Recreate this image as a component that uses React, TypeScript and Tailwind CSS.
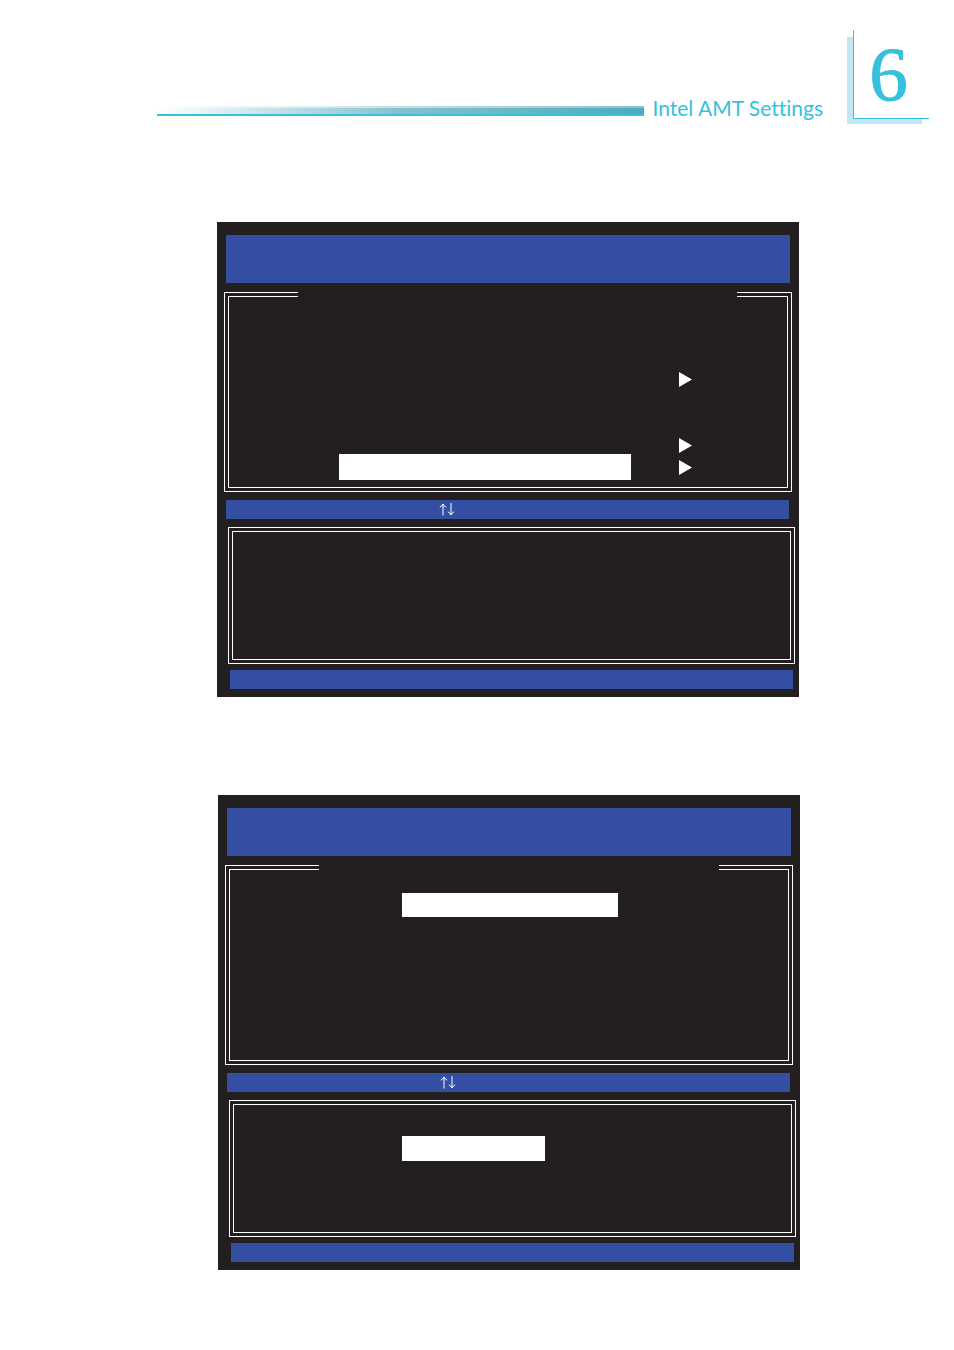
import type { ReactNode } from "react";
import clsx from "clsx";

const MENU_ROWS = [
  { id: 1 },
  { id: 2 },
  { id: 3 },
  { id: 4, arrow: true },
  { id: 5 },
  { id: 6 },
  { id: 7, arrow: true },
  { id: 8, arrow: true, selected: true },
];

function PageHeader() {
  return (
    <header className="flex pl-[157px] pr-[25px] pt-[30px]">
      <div className="mt-[76px] h-[10px] flex-1 border-b-2 border-[#35c1de]">
        <div className="h-[2px] bg-linear-to-r from-white via-[#c5e1e7] to-[#85c2cd]" />
        <div className="h-[6px] bg-linear-to-r from-white via-[#83c1cd] to-[#4aacbe]" />
      </div>
      <h1 className="ml-[8px] mt-[65px] whitespace-nowrap font-['Lato',sans-serif] text-[21px] leading-[26px] text-[#35c1de] [font-variant-ligatures:none]">
        Intel AMT Settings
      </h1>
      <div className="relative ml-[24px] h-[94px] w-[82px]">
        <div className="absolute bottom-0 left-0 h-[87px] w-[75px] bg-[#c2e7f0]" />
        <div className="relative ml-[6px] flex h-[89px] items-center justify-center border-b border-l border-[#35c1de] bg-white pr-[6px] font-['Liberation_Serif',serif] text-[77px] leading-[80px] text-[#35c1de] [-webkit-text-stroke:1px_#35c1de]">
          6
        </div>
      </div>
    </header>
  );
}

function DoubleFrame({ className, children }: { className: string; children?: ReactNode }) {
  return (
    <div className={clsx("flex border border-white p-[3px]", className)}>
      <div className="flex-1 border border-white">{children}</div>
    </div>
  );
}

// covers both top border lines where the frame's title goes
function TitleGap({ className }: { className: string }) {
  return <div className={clsx("relative -mt-[5px] h-[5px] bg-[#231f20]", className)} />;
}

function MenuArrow() {
  return (
    <svg width="13" height="15" viewBox="0 0 13 15" className="fill-white">
      <path d="M0 0L13 7.5L0 15Z" />
    </svg>
  );
}

function MoveKeys() {
  return (
    <svg width="16" height="13" viewBox="0 0 16 13" fill="none" stroke="white" strokeWidth="1">
      <path d="M4 1V12.5M0.8 4.2Q3.2 3 4 1Q4.8 3 7.2 4.2" />
      <path d="M12 0V11.5M8.8 8.8Q11.2 10 12 12Q12.8 10 15.2 8.8" />
    </svg>
  );
}

function Screen({ className, menu, detail }: { className: string; menu: ReactNode; detail?: ReactNode }) {
  return (
    <section className={clsx("bg-[#231f20] pb-[8px] pt-[13px]", className)}>
      <div className="mx-[9px] h-[48px] bg-[#344fa2]" />
      <DoubleFrame className="mx-[7px] mt-[9px] h-[200px]">{menu}</DoubleFrame>
      <div className="ml-[9px] mr-[10px] mt-[8px] flex h-[19px] items-center bg-[#344fa2] pl-[213px]">
        <MoveKeys />
      </div>
      <DoubleFrame className="ml-[11px] mr-[4px] mt-[8px] h-[137px]">{detail}</DoubleFrame>
      <div className="ml-[13px] mr-[6px] mt-[6px] h-[19px] bg-[#344fa2]" />
    </section>
  );
}

export default function App() {
  return (
    <div className="min-h-screen bg-white pb-[80px]">
      <PageHeader />
      <main className="pt-[98px]">
        <Screen
          className="ml-[217px] mr-[155px]"
          menu={
            <>
              <TitleGap className="ml-[69px] mr-[50px]" />
              <ul className="pl-[110px] pr-[95px] pt-[5px]">
                {MENU_ROWS.map((row) => (
                  <li key={row.id} className="flex h-[22px] items-center justify-end gap-[48px]">
                    {row.selected && <div className="h-[26px] flex-1 bg-white" />}
                    {row.arrow && <MenuArrow />}
                  </li>
                ))}
              </ul>
            </>
          }
        />
        <Screen
          className="ml-[218px] mr-[154px] mt-[98px]"
          menu={
            <>
              <TitleGap className="ml-[89px] mr-[69px]" />
              <div className="ml-[172px] mr-[170px] mt-[23px] h-[24px] bg-white" />
            </>
          }
          detail={<div className="ml-[168px] mr-[246px] mt-[31px] h-[25px] bg-white" />}
        />
      </main>
    </div>
  );
}
